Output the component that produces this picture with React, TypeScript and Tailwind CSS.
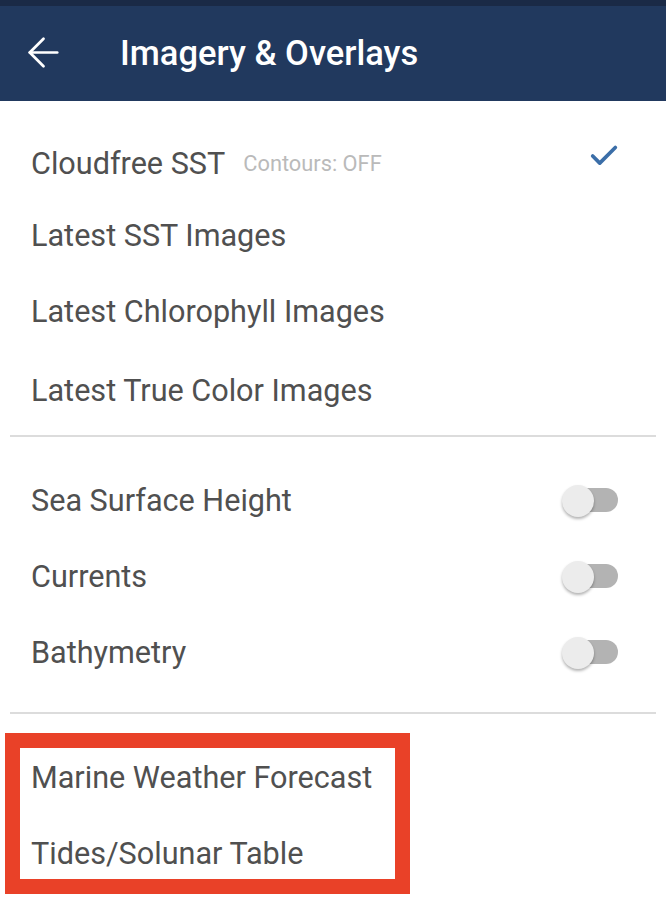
import { ArrowLeft, Check } from 'lucide-react';

const imagery = [
  { label: 'Cloudfree SST', note: 'Contours: OFF', checked: true, h: 'h-[72px]' },
  { label: 'Latest SST Images', h: 'h-[72px]' },
  { label: 'Latest Chlorophyll Images', h: 'h-[80px]' },
  { label: 'Latest True Color Images', h: 'h-[78px]' },
];

const overlays = ['Sea Surface Height', 'Currents', 'Bathymetry'];

function Toggle() {
  return (
    <div className="relative h-[34px] w-[56px]">
      <div className="absolute right-0 top-[4px] h-[24px] w-[44px] rounded-full bg-[#b3b3b3]" />
      <div className="absolute left-0 top-[1px] h-[32px] w-[32px] rounded-full bg-[#ececec] shadow-[0_2px_3px_rgba(0,0,0,0.3)]" />
    </div>
  );
}

export default function App() {
  return (
    <div className="min-h-[908px] w-[666px] bg-white font-['Roboto',sans-serif] text-[#505050]">
      <div className="h-[6px] bg-[#1a2a46]" />
      <header className="flex h-[95px] items-center bg-[#21395e] text-white">
        <ArrowLeft className="ml-[20px] mt-[-2px] h-[47px] w-[47px]" strokeWidth={1.4} />
        <h1 className="ml-[53px] text-[34.5px] font-medium">Imagery &amp; Overlays</h1>
      </header>

      <div className="pt-[27px]">
        {imagery.map((item) => (
          <div key={item.label} className={`flex items-center pl-[31px] pr-[45px] ${item.h}`}>
            <span className="text-[30.6px]">{item.label}</span>
            {item.note && <span className="ml-[18px] mt-[1px] text-[21.8px] text-[#bababa]">{item.note}</span>}
            {item.checked && <Check className="ml-auto -mt-[16px] h-[34px] w-[34px] text-[#3b6ea8]" strokeWidth={2.6} />}
          </div>
        ))}
      </div>

      <div className="mx-[10px] mt-[5px] h-[2px] bg-[#dcdcdc]" />

      <div className="pt-[26px]">
        {overlays.map((label) => (
          <div key={label} className="flex h-[76px] items-center justify-between pl-[31px] pr-[48px]">
            <span className="text-[30.6px]">{label}</span>
            <Toggle />
          </div>
        ))}
      </div>

      <div className="mx-[10px] mt-[21px] h-[2px] bg-[#dcdcdc]" />

      <div className="ml-[5px] mt-[19px] w-[405px] border-[15px] border-[#e94128]">
        <div className="flex flex-col gap-[40px] pb-[7px] pl-[11px] pt-[12px]">
          <span className="flex h-[36px] items-center text-[30.6px]">Marine Weather Forecast</span>
          <span className="flex h-[36px] items-center text-[30.6px]">Tides/Solunar Table</span>
        </div>
      </div>
    </div>
  );
}
